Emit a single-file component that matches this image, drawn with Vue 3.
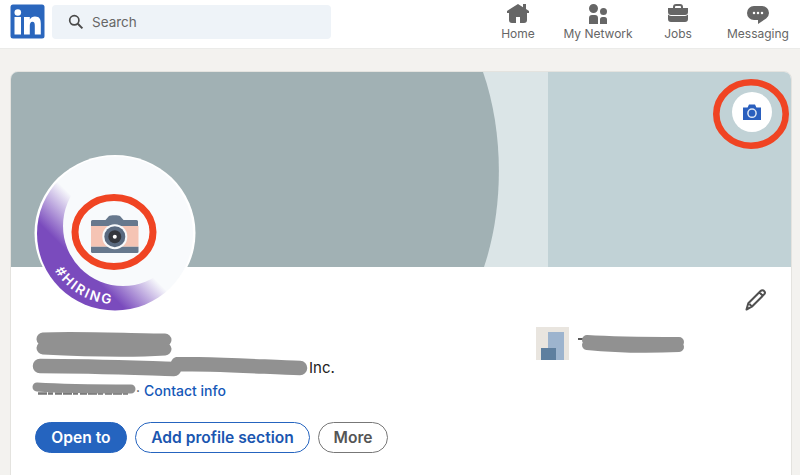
<script setup>
const navItems = [
  { label: 'Home', d: 'M23 9v2h-2v7a3 3 0 01-3 3h-4v-6h-4v6H6a3 3 0 01-3-3v-7H1V9l11-7 5 3.18V2h3v5.09z' },
  { label: 'My Network', d: 'M12 16v6H3v-6a3 3 0 013-3h3a3 3 0 013 3zm5.5-3A3.5 3.5 0 1014 9.5a3.5 3.5 0 003.5 3.5zm1 2h-2a2.5 2.5 0 00-2.5 2.5V22h7v-4.5a2.5 2.5 0 00-2.5-2.5zM7.5 2A4.5 4.5 0 1012 6.5 4.49 4.49 0 007.5 2z' },
  { label: 'Jobs', d: 'M17 6V5a3 3 0 00-3-3h-4a3 3 0 00-3 3v1H2v4a3 3 0 003 3h14a3 3 0 003-3V6zM9 5a1 1 0 011-1h4a1 1 0 011 1v1H9zm10 9a4 4 0 003-1.38V17a3 3 0 01-3 3H5a3 3 0 01-3-3v-4.38A4 4 0 005 14z' },
  { label: 'Messaging', d: 'M16 4H8a7 7 0 000 14h4v4l8.16-5.39A6.78 6.78 0 0023 11a7 7 0 00-7-7zm-8 8.25A1.25 1.25 0 119.25 11 1.25 1.25 0 018 12.25zm4 0A1.25 1.25 0 1113.25 11 1.25 1.25 0 0112 12.25zm4 0A1.25 1.25 0 1117.25 11 1.25 1.25 0 0116 12.25z' },
];
</script>

<template>
  <div class="page">
    <header class="nav">
      <svg class="logo" width="35" height="35" viewBox="0 0 35 35">
        <rect x="0.5" y="0.5" width="34" height="34" rx="2.5" fill="#2a66bd" />
        <circle cx="7.8" cy="8.500" r="3.300" fill="#fff" />
        <rect x="4.500" y="13" width="6.500" height="17.500" fill="#fff" />
        <path d="M14 13h5.800v2.400c1-1.700 2.900-2.800 5.200-2.800 4.600 0 5.800 2.700 5.800 7.400v10.500h-6v-8.700c0-2.400-.5-4-2.400-4s-2.600 1.700-2.600 4v8.700H14z" fill="#fff" />
      </svg>
      <div class="search">
        <svg width="16" height="16" viewBox="0 0 16 16">
          <circle cx="6.3" cy="6.3" r="4.6" fill="none" stroke="#4a4a4a" stroke-width="1.7" />
          <path d="M9.8 9.8l4.6 4.6" stroke="#4a4a4a" stroke-width="2" />
        </svg>
        <span>Search</span>
      </div>
      <nav class="nav-items">
        <div v-for="item in navItems" :key="item.label" class="nav-item">
          <svg width="24" height="24" viewBox="0 0 24 24"><path :d="item.d" fill="#666" /></svg>
          <span>{{ item.label }}</span>
        </div>
      </nav>
    </header>

    <main class="card">
      <div class="banner">
        <svg class="banner-art" width="780" height="195" viewBox="0 0 780 195">
          <rect width="780" height="195" fill="#c1d2d6" />
          <rect width="537" height="195" fill="#dbe5e7" />
          <path d="M0 0H472C493 60 493 136 473 195H0z" fill="#a1b1b4" />
        </svg>
        <div class="cover-btn">
          <svg width="20" height="18" viewBox="0 0 20 18">
            <path d="M1 4.500h4.600L7 1.500h6l1.400 3H19V17H1z" fill="#2a5fbe" />
            <circle cx="10" cy="10.200" r="4.100" fill="none" stroke="#dfe8f4" stroke-width="1.500" />
          </svg>
        </div>
        <svg class="ring ring-cover" width="78" height="78" viewBox="0 0 78 78">
          <ellipse cx="39" cy="39" rx="34.700" ry="31.700" fill="none" stroke="#f04423" stroke-width="6.600" />
        </svg>
      </div>

      <svg class="avatar" width="170" height="170" viewBox="0 0 170 170">
        <defs>
          <linearGradient id="hire" gradientUnits="userSpaceOnUse" x1="52" y1="118" x2="82" y2="88">
            <stop offset="0" stop-color="#7a4bbd" />
            <stop offset="1" stop-color="#7a4bbd" stop-opacity="0" />
          </linearGradient>
          <path id="hire-arc" d="M24.800 122.600A71 71 0 0 0 115 149.300" />
        </defs>
        <ellipse cx="85" cy="85" rx="80.500" ry="78" fill="#fff" />
        <ellipse cx="85" cy="85.500" rx="78" ry="77" fill="#f8fafc" />
        <ellipse cx="85" cy="85.500" rx="78" ry="77" fill="url(#hire)" />
        <circle cx="93" cy="78" r="60" fill="#f8fafc" />
        <text class="hire-text" fill="#fff"><textPath href="#hire-arc">#HIRING</textPath></text>

        <path d="M62.500 72h13l3.500-4c1-1 10-1 11 0l3.500 4h13a1.500 1.500 0 011.500 1.500V78H61v-4.500a1.500 1.500 0 011.500-1.500z" fill="#67788d" />
        <rect x="61" y="78" width="47.500" height="20.700" fill="#f5c4b4" />
        <path d="M61 98.700h47.500v4.800a1.500 1.500 0 01-1.500 1.500H62.500a1.500 1.500 0 01-1.500-1.500z" fill="#67788d" />
        <circle cx="84.800" cy="88.700" r="12.500" fill="#f8fafc" />
        <circle cx="84.800" cy="88.700" r="10.500" fill="#5a6a80" />
        <circle cx="84.800" cy="88.700" r="6.500" fill="#33363d" />
        <circle cx="84.800" cy="88.700" r="2" fill="#fff" />
        <ellipse cx="84" cy="84" rx="39" ry="34.500" fill="none" stroke="#f04423" stroke-width="7" />
      </svg>

      <section class="info">
        <div class="edit-row">
          <svg width="24" height="24" viewBox="0 0 24 24">
            <path d="M3.500 21.500l1.800-6.200L17.600 3c1-1 2.600-1 3.500 0 .9.900.9 2.500 0 3.400L8.800 18.700zM6.400 16l2.600 2.600M16.500 4.500l3 3" fill="none" stroke="#505050" stroke-width="2" stroke-linejoin="round" />
          </svg>
        </div>

        <div class="details">
          <div class="who">
            <svg class="scrib name" width="140" height="26" viewBox="0 0 140 26">
              <path d="M9 8c30-2 90 1 122 1M9 17c40 2 90 3 122 1" fill="none" stroke="#919191" stroke-width="13" stroke-linecap="round" />
            </svg>
            <div class="headline">
              <svg class="scrib" width="277" height="20" viewBox="0 0 277 20">
                <path d="M8 9c50 0 100 2 134 3M146 7c40 0 90 3 122 4" fill="none" stroke="#919191" stroke-width="14.500" stroke-linecap="round" />
              </svg>
              <span>Inc.</span>
            </div>
            <div class="contact">
              <svg class="scrib" width="104" height="20" viewBox="0 0 104 20">
                <path d="M6 13.500h92" fill="none" stroke="#777" stroke-width="2.500" stroke-dasharray="9 1 5 2 7 1" />
                <path d="M5 7c30 2 70 2 94 2" fill="none" stroke="#919191" stroke-width="9" stroke-linecap="round" />
              </svg>
              <span class="dot">·</span>
              <a class="link">Contact info</a>
            </div>
            <div class="actions">
              <button class="btn primary">Open to</button>
              <button class="btn outline">Add profile section</button>
              <button class="btn muted">More</button>
            </div>
          </div>

          <div class="company">
            <svg width="33" height="33" viewBox="0 0 33 33">
              <rect width="33" height="33" fill="#e9e5df" />
              <rect x="12" y="5" width="16" height="28" fill="#9db4ce" />
              <rect x="5" y="21" width="15" height="12" fill="#5e7f9f" />
            </svg>
            <svg class="scrib" width="110" height="22" viewBox="0 0 110 22">
              <path d="M0 6h5" stroke="#222" stroke-width="1.500" />
              <path d="M9 7c30 2 70 2 92 2M9 12c30 3 70 3 92 2" fill="none" stroke="#919191" stroke-width="10" stroke-linecap="round" />
            </svg>
          </div>
        </div>
      </section>
    </main>
  </div>
</template>

<style>
html, body {
  margin: 0;
  overflow: hidden;
}
</style>

<style scoped>
.page {
  width: 800px;
  height: 475px;
  overflow: hidden;
  background: #f3f2ef;
  font-family: Inter, "Liberation Sans", sans-serif;
}

.nav {
  display: flex;
  align-items: center;
  height: 49px;
  background: #fff;
  border-bottom: 1px solid #ebebe9;
  padding-left: 10px;
  box-sizing: border-box;
}

.logo {
  flex: none;
  margin-top: -5px;
}

.search {
  display: flex;
  align-items: center;
  gap: 8px;
  width: 279px;
  height: 34px;
  margin: -5px 0 0 7px;
  padding-left: 16px;
  box-sizing: border-box;
  background: #eef3f8;
  border-radius: 4px;
  color: #666;
  font-size: 13.5px;
}

.nav-items {
  display: flex;
  margin-left: auto;
  margin-right: 2px;
}

.nav-item {
  display: flex;
  flex-direction: column;
  align-items: center;
  width: 80px;
  height: 49px;
  padding-top: 2px;
  box-sizing: border-box;
  color: #666;
  font-size: 12px;
  line-height: 16px;
  white-space: nowrap;
}

.card {
  position: relative;
  width: 782px;
  height: 500px;
  margin: 22px 0 0 10px;
  box-sizing: border-box;
  background: #fff;
  border: 1px solid #e4e3df;
  border-radius: 8px 8px 0 0;
  overflow: hidden;
}

.banner {
  position: relative;
  height: 195px;
}

.banner-art {
  display: block;
}

.cover-btn {
  position: absolute;
  top: 20px;
  right: 19px;
  display: flex;
  align-items: center;
  justify-content: center;
  width: 40px;
  height: 40px;
  border-radius: 50%;
  background: #fff;
}

.ring-cover {
  position: absolute;
  top: 3px;
  right: 1px;
}

.avatar {
  position: absolute;
  top: 76px;
  left: 18.500px;
}

.hire-text {
  font-size: 13.5px;
  font-weight: 600;
  letter-spacing: 2px;
}

.info {
  padding: 21px 24px 0 21px;
}

.edit-row {
  display: flex;
  justify-content: flex-end;
  height: 24px;
}

.details {
  display: flex;
  margin-top: 19px;
}

.who {
  width: 504px;
}

.scrib {
  display: block;
  flex: none;
}

.name {
  margin-left: 2px;
}

.headline {
  display: flex;
  align-items: center;
  height: 20px;
  font-size: 15px;
  color: #222;
}

.contact {
  display: flex;
  align-items: center;
  height: 20px;
  margin-top: 3px;
  font-size: 14px;
}

.dot {
  margin: 0 4px 0 0;
  color: #555;
}

.link {
  color: #1558b8;
  font-weight: 500;
}

.actions {
  display: flex;
  gap: 8px;
  margin: 22px 0 0 3px;
}

.btn {
  height: 31px;
  padding: 0;
  border-radius: 16px;
  background: #fff;
  font-family: inherit;
  font-size: 15.6px;
  font-weight: 600;
  box-sizing: border-box;
}

.primary {
  width: 92px;
  border: 1px solid #2564bf;
  background: #2564bf;
  color: #fff;
}

.outline {
  width: 175px;
  border: 1px solid #2564bf;
  color: #1a56b0;
}

.muted {
  width: 70px;
  border: 1px solid #777;
  color: #555;
}

.company {
  display: flex;
  align-items: center;
  gap: 9px;
  margin-top: -4px;
  height: 33px;
}
</style>
